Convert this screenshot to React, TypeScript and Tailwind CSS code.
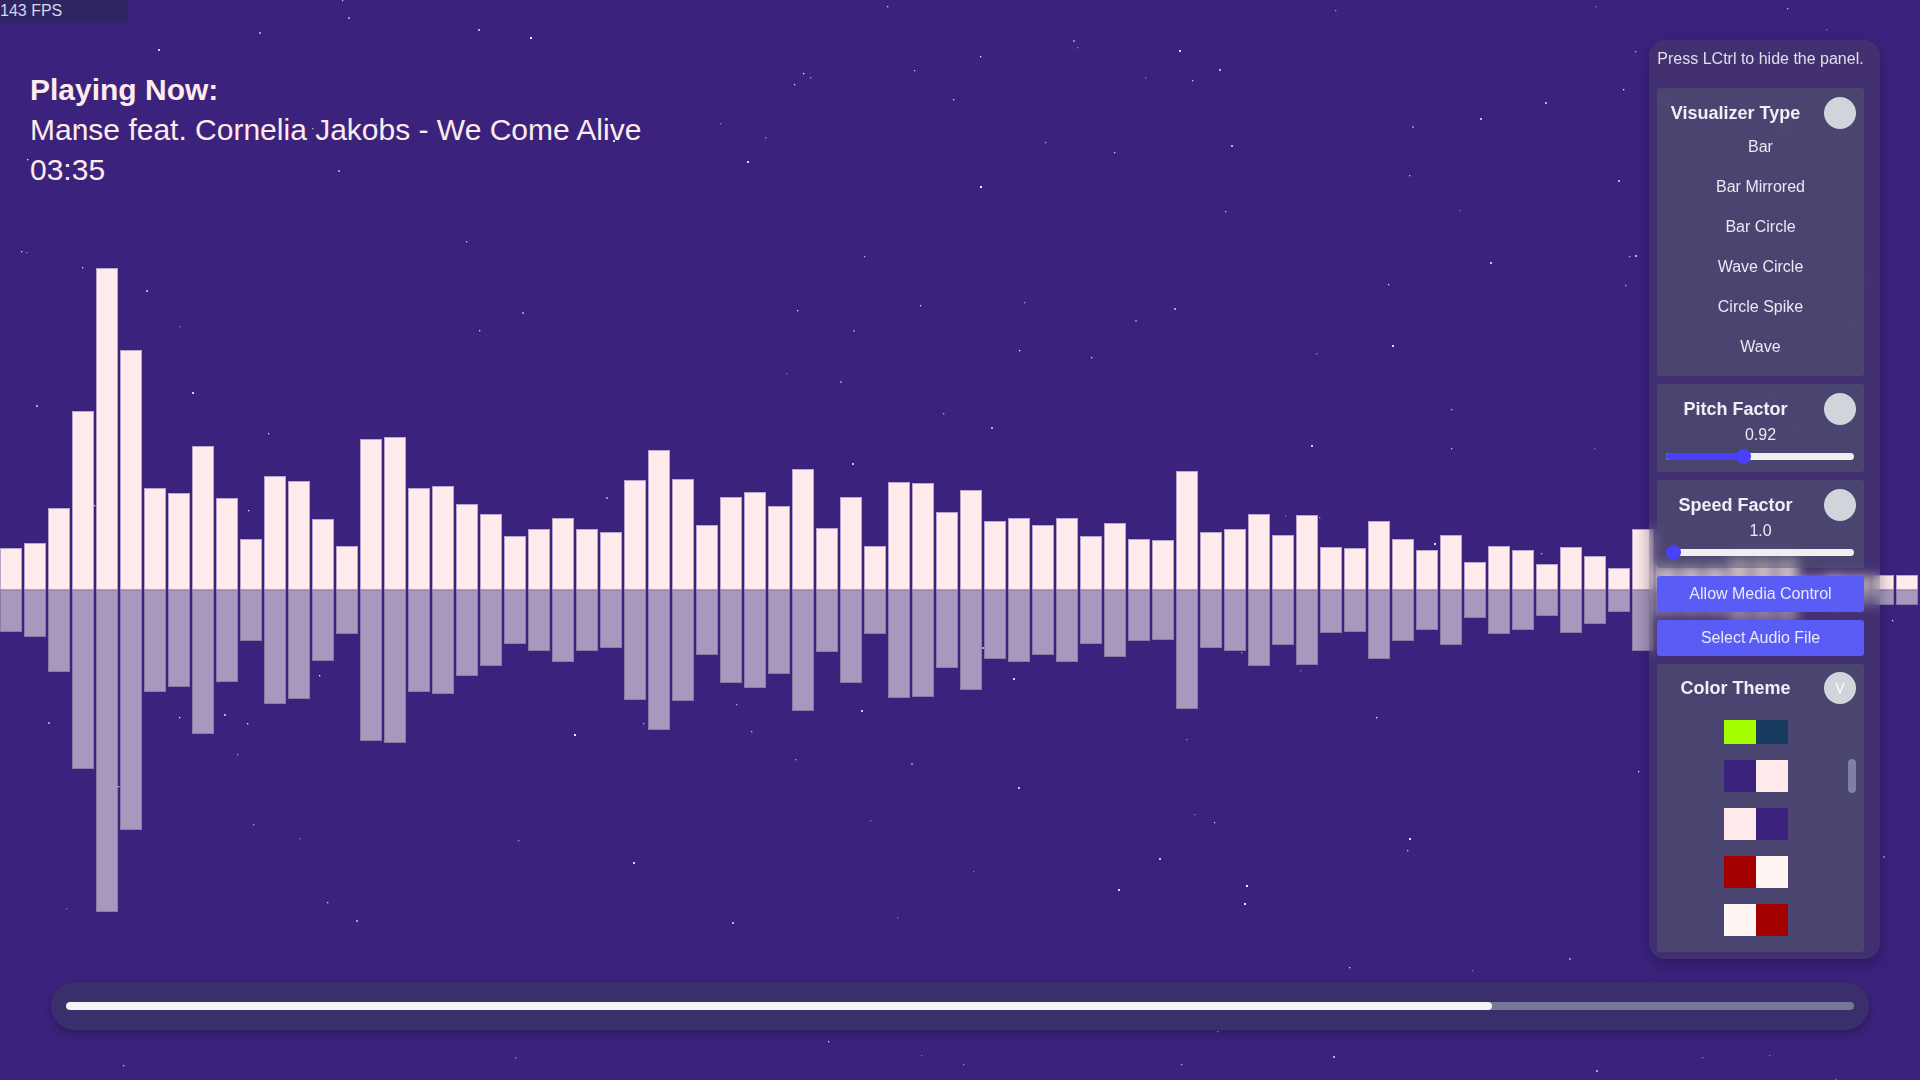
import React from "react";

const H = [42,47,82,179,322,240,102,97,144,92,51,114,109,71,44,151,153,102,104,86,76,54,61,72,61,58,110,140,111,65,93,98,84,121,62,93,44,108,107,78,100,69,72,65,72,54,67,51,50,119,58,61,76,55,75,43,42,69,51,40,55,28,44,40,26,43,34,22,61,25,25,25,33,33,33,12,15,14,15,15];

function rng(seed: number) {
  let a = seed;
  return () => {
    a |= 0;
    a = (a + 0x6d2b79f5) | 0;
    let t = Math.imul(a ^ (a >>> 15), 1 | a);
    t = (t + Math.imul(t ^ (t >>> 7), 61 | t)) ^ t;
    return ((t ^ (t >>> 14)) >>> 0) / 4294967296;
  };
}

const r = rng(1234);
const STARS = Array.from({ length: 190 }, () => ({
  x: Math.floor(r() * 1920),
  y: Math.floor(r() * 1080),
  s: r() < 0.3 ? 2 : 1.3,
  o: 0.35 + r() * 0.6,
}));

function Canvas() {
  return (
    <svg className="absolute inset-0" width={1920} height={1080} viewBox="0 0 1920 1080">
      {STARS.map((s, i) => (
        <rect key={i} x={s.x} y={s.y} width={s.s} height={s.s} fill="#ffffff" opacity={s.o} />
      ))}
      {H.map((h, i) => (
        <g key={"b" + i}>
          <rect x={i * 24 + 0.5} y={590 - h + 0.5} width={21} height={h - 0.5} fill="#ffeaec" stroke="#b6a7cc" strokeWidth={1} />
          <rect x={i * 24 + 0.5} y={590} width={21} height={h - 0.5} fill="#a699bd" stroke="#8a7ca8" strokeWidth={1} />
        </g>
      ))}
    </svg>
  );
}

function Card({ title, icon, children }: { title: string; icon?: string; children: React.ReactNode }) {
  return (
    <div className="rounded-[3px] bg-[rgba(84,90,112,0.5)] pt-[9px] pb-[9px]">
      <div className="flex items-center h-[32px] gap-[10px] pr-[8px]">
        <div className="flex-1 text-center font-bold text-[18px] leading-[22px] text-[#f1eef7] whitespace-nowrap">{title}</div>
        <div className="w-[32px] h-[32px] rounded-full bg-[#d1d5db] flex items-center justify-center text-white text-[14px] leading-none">
          {icon}
        </div>
      </div>
      {children}
    </div>
  );
}

function Slider({ fill, thumb }: { fill: string; thumb: string }) {
  return (
    <div className="pl-[9px] pr-[10px] mt-[3px] h-[16px] flex items-center">
      <div className="relative w-full h-[7px] rounded-full bg-[#efefef]">
        <div className={"absolute left-0 top-0 h-full rounded-full bg-[#4a3ffa] " + fill} />
        <div className={"absolute top-[-4px] w-[15px] h-[15px] rounded-full bg-[#4a3ffa] " + thumb} />
      </div>
    </div>
  );
}

const THEMES: [string, string][] = [
  ["#a6ff00", "#173a5e"],
  ["#3b237d", "#ffe9ea"],
  ["#ffe9ea", "#3b237d"],
  ["#a30000", "#fff5f3"],
  ["#fff5f3", "#a30000"],
  ["#173a5e", "#a6ff00"],
];

export default function App() {
  return (
    <div className="relative w-[1920px] h-[1080px] overflow-hidden bg-[#3b237d] font-['Liberation_Sans',Arial,sans-serif]">
      <Canvas />
      <div className="relative flex flex-col h-full">
        <header className="pt-[70px] pl-[30px] text-[30px] leading-[40px] text-[#ffeaec]">
          <div className="font-bold">Playing Now:</div>
          <div>Manse feat. Cornelia Jakobs - We Come Alive</div>
          <div>03:35</div>
        </header>
        <div className="flex-1" />
        <div className="mx-[51px] mb-[50px] h-[48px] rounded-full bg-[#3a2f6c] px-[15px] flex items-center shadow-[0_4px_10px_rgba(20,10,50,0.35)]">
          <div className="h-[8px] w-full rounded-full bg-[#77779a] overflow-hidden">
            <div className="h-full w-[1426px] rounded-full bg-[#f3f4f8]" />
          </div>
        </div>
      </div>

      <div className="absolute top-0 left-0 w-[128px] h-[23px] bg-[#2f2563] text-[16px] leading-[22px] text-[#d8d4ea]">143 FPS</div>

      <div className="absolute top-[40px] right-[40px] w-[231px] h-[919px] rounded-2xl bg-[rgba(82,78,86,0.3)] backdrop-blur-[6px] shadow-[0_6px_16px_rgba(20,10,50,0.35)] pl-[8px] pr-[16px] pt-[8px]">
        <p className="text-[16px] leading-[22px] text-[#e2deeb] text-center whitespace-nowrap">Press LCtrl to hide the panel.</p>
        <div className="mt-[18px] flex flex-col gap-[8px]">
          <Card title="Visualizer Type">
            <div className="mt-[-2px] flex flex-col">
              {["Bar", "Bar Mirrored", "Bar Circle", "Wave Circle", "Circle Spike", "Wave"].map((t) => (
                <div key={t} className="h-[40px] flex items-center justify-center text-[16px] text-[#ebe8f2]">
                  {t}
                </div>
              ))}
            </div>
          </Card>
          <div className="rounded-[3px] bg-[rgba(84,90,112,0.5)] pt-[9px] pb-[8px]">
            <div className="flex items-center h-[32px] gap-[10px] pr-[8px]">
              <div className="flex-1 text-center font-bold text-[18px] leading-[22px] text-[#f1eef7]">Pitch Factor</div>
              <div className="w-[32px] h-[32px] rounded-full bg-[#d1d5db]" />
            </div>
            <div className="h-[20px] leading-[20px] text-center text-[16px] text-[#ebe8f2]">0.92</div>
            <Slider fill="w-[78px]" thumb="left-[70px]" />
          </div>
          <div className="rounded-[3px] bg-[rgba(84,90,112,0.5)] pt-[9px] pb-[8px]">
            <div className="flex items-center h-[32px] gap-[10px] pr-[8px]">
              <div className="flex-1 text-center font-bold text-[18px] leading-[22px] text-[#f1eef7]">Speed Factor</div>
              <div className="w-[32px] h-[32px] rounded-full bg-[#d1d5db]" />
            </div>
            <div className="h-[20px] leading-[20px] text-center text-[16px] text-[#ebe8f2]">1.0</div>
            <Slider fill="w-[8px]" thumb="left-[0px]" />
          </div>
          <button className="h-[36px] w-full rounded-[3px] bg-[#5a5cf6] text-[16px] text-[#e8e8ff]">Allow Media Control</button>
          <button className="h-[36px] w-full rounded-[3px] bg-[#5a5cf6] text-[16px] text-[#e8e8ff]">Select Audio File</button>
          <div className="rounded-[3px] bg-[rgba(84,90,112,0.5)] pt-[8px] pb-[8px]">
            <div className="flex items-center h-[32px] gap-[10px] pr-[8px]">
              <div className="flex-1 text-center font-bold text-[18px] leading-[22px] text-[#f1eef7]">Color Theme</div>
              <div className="w-[32px] h-[32px] rounded-full bg-[#d1d5db] flex items-center justify-center text-white text-[14px] leading-none">V</div>
            </div>
            <div className="relative mt-[16px] h-[224px] overflow-hidden">
              <div className="mt-[-8px] flex flex-col items-center gap-[16px] pr-[9px]">
                {THEMES.map(([a, b], i) => (
                  <div key={i} className="flex">
                    <div className="w-[32px] h-[32px]" style={{ backgroundColor: a }} />
                    <div className="w-[32px] h-[32px]" style={{ backgroundColor: b }} />
                  </div>
                ))}
              </div>
              <div className="absolute right-[8px] top-[39px] w-[8px] h-[34px] rounded-full bg-[#7f7fa6]" />
            </div>
          </div>
        </div>
      </div>
    </div>
  );
}
